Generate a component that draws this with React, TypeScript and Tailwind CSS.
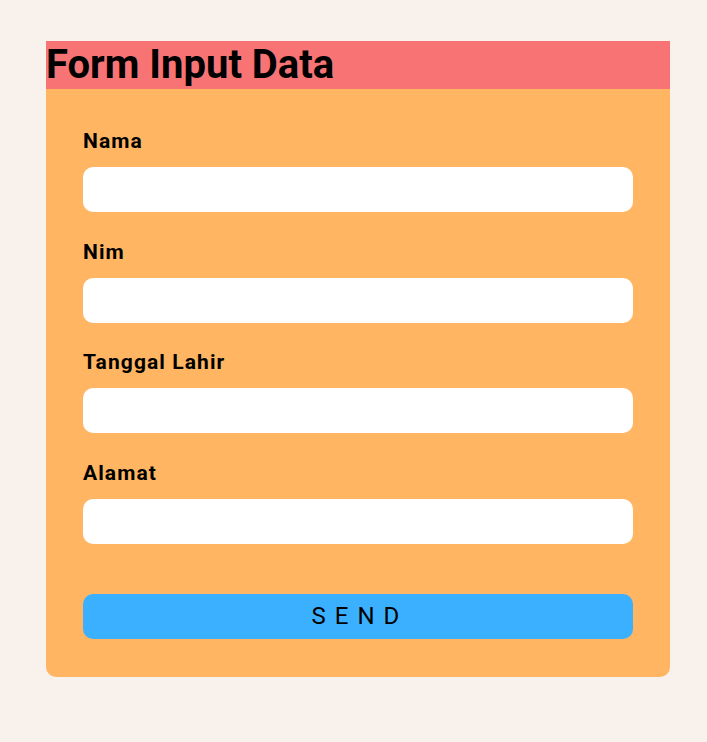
const fields = ['Nama', 'Nim', 'Tanggal Lahir', 'Alamat'];

export default function App() {
  return (
    <div className="min-h-screen w-full bg-[#f9f1ec] pt-[41px] pl-[46px] font-['Roboto',sans-serif] text-black">
      <div className="w-[624px] rounded-b-[10px] bg-[#ffb562]">
        <div className="h-[48px] bg-[#f87474]">
          <h1 className="text-[40px] leading-[48px] font-bold">Form Input Data</h1>
        </div>
        <form className="flex flex-col px-[37px] pt-[40px] pb-[38px]">
          {fields.map((f) => (
            <div key={f} className="mb-[27.67px] flex flex-col">
              <label className="mb-[14px] text-[21px] leading-[24px] font-bold tracking-[1.1px]">{f}</label>
              <input type="text" className="h-[45px] w-full rounded-[10px] bg-white outline-none" />
            </div>
          ))}
          <button
            type="button"
            className="mt-[22px] h-[45px] w-full rounded-[10px] bg-[#3ab0ff] text-[24px] tracking-[9px] indent-[4px]"
          >
            SEND
          </button>
        </form>
      </div>
    </div>
  );
}
